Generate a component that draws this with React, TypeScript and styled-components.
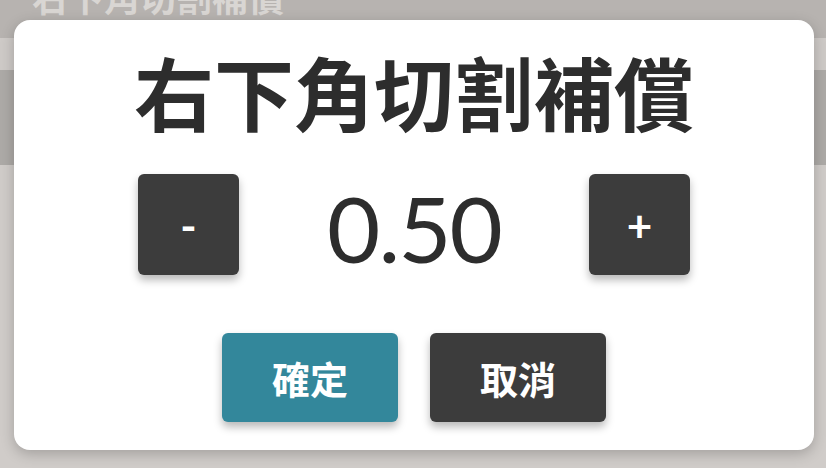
import React, { useState } from "react";
import styled, { createGlobalStyle } from "styled-components";

const GlobalStyle = createGlobalStyle`
  html, body {
    margin: 0;
    padding: 0;
    width: 826px;
    height: 468px;
    overflow: hidden;
    font-family: "Noto Sans CJK TC", "Noto Sans", sans-serif;
  }
`;

const STEP = 0.05;

const App = () => {
  const [offset, setOffset] = useState(0.5);

  const onClickMinus = () => setOffset((v) => Math.max(0, +(v - STEP).toFixed(2)));
  const onClickPlus = () => setOffset((v) => +(v + STEP).toFixed(2));

  return (
    <Page>
      <GlobalStyle />
      {/* 背後的設定頁（被遮罩壓暗） */}
      <HeaderBar>
        <HeaderTitle>右下角切割補償</HeaderTitle>
      </HeaderBar>
      <Band tone="light" />
      <Band tone="dark" />
      <Rest />

      <Dialog>
        <STitle>右下角切割補償</STitle>
        <SStepRow>
          <SStepButton onClick={onClickMinus}>-</SStepButton>
          <SValue>{offset.toFixed(2)}</SValue>
          <SStepButton onClick={onClickPlus}>+</SStepButton>
        </SStepRow>
        <SActionRow>
          <SActionButton variant="primary">確定</SActionButton>
          <SActionButton variant="dark">取消</SActionButton>
        </SActionRow>
      </Dialog>
    </Page>
  );
};

export default App;

const Page = styled.div`
  position: relative;
  width: 826px;
  height: 468px;
  display: flex;
  flex-direction: column;
  background: #d0ccc9;
  overflow: hidden;
`;

const HeaderBar = styled.div`
  height: 38px;
  background: #b7b3b0;
  overflow: hidden;
`;

const HeaderTitle = styled.div`
  margin: -22px 0 0 32px;
  font-size: 36px;
  line-height: 36px;
  font-weight: 700;
  color: #d9d6d3;
`;

const Band = styled.div<{ tone: "light" | "dark" }>`
  height: ${({ tone }) => (tone === "light" ? "32px" : "95px")};
  background: ${({ tone }) => (tone === "light" ? "#cecac7" : "#adaaa7")};
`;

const Rest = styled.div`
  flex: 1;
  background: #d0ccc9;
`;

const Dialog = styled.div`
  position: absolute;
  left: 14px;
  top: 20px;
  width: 800px;
  height: 430px;
  box-sizing: border-box;
  padding-top: 30px;
  display: flex;
  flex-direction: column;
  align-items: center;
  background: #ffffff;
  border-radius: 16px;
  box-shadow: 0 4px 14px rgba(0, 0, 0, 0.22);
`;

const STitle = styled.div`
  font-size: 80px;
  line-height: 80px;
  font-weight: 700;
  color: #2d2d2d;
`;

const SStepRow = styled.div`
  display: grid;
  grid-template-columns: 101px 350px 101px;
  align-items: center;
  margin-top: 44px;
`;

const SStepButton = styled.button`
  width: 101px;
  height: 101px;
  padding: 0;
  border: none;
  border-radius: 6px;
  background: #3c3c3c;
  color: #ffffff;
  font-family: "Lato", "Noto Sans", sans-serif;
  font-size: 44px;
  font-weight: 700;
  box-shadow: 0 5px 9px rgba(0, 0, 0, 0.28);
  display: flex;
  align-items: center;
  justify-content: center;
  cursor: pointer;
`;

const SValue = styled.div`
  padding-top: 6px;
  text-align: center;
  font-family: "Lato", "Noto Sans", sans-serif;
  font-size: 92px;
  font-weight: 400;
  line-height: 95px;
  letter-spacing: -2px;
  color: #2d2d2d;
`;

const SActionRow = styled.div`
  display: flex;
  gap: 32px;
  margin-top: 58px;
`;

const SActionButton = styled.button<{ variant: "primary" | "dark" }>`
  width: 176px;
  height: 89px;
  border: none;
  border-radius: 6px;
  background: ${({ variant }) => (variant === "primary" ? "#33879b" : "#3c3c3c")};
  color: #ffffff;
  font-family: "Noto Sans CJK TC", "Noto Sans", sans-serif;
  font-size: 38px;
  font-weight: 700;
  box-shadow: 0 5px 9px rgba(0, 0, 0, 0.28);
  cursor: pointer;
`;
